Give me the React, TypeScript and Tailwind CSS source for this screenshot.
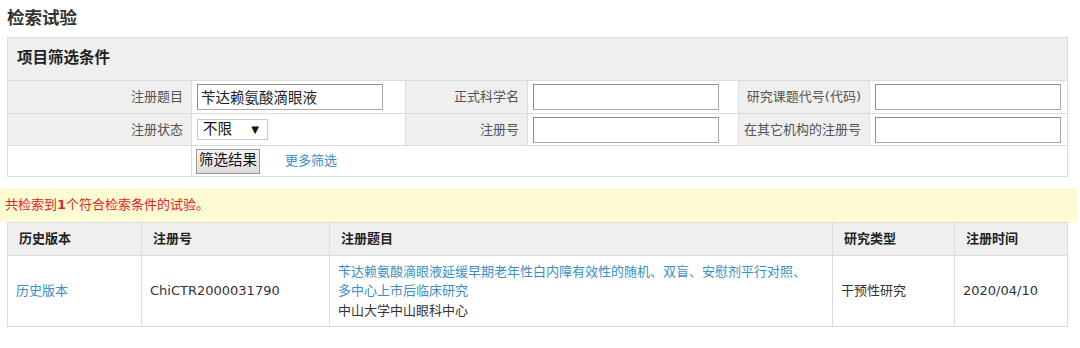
const font = { fontFamily: '"DejaVu Sans", "Noto Sans CJK SC", sans-serif' };

const Label = ({ text }: { text: string }) => (
  <td className="bg-[#efefef] border border-[#dcdcdc] text-right pr-2 text-[13px] text-[#555]">{text}</td>
);

const Field = ({ value, w = "w-[186px]" }: { value?: string; w?: string }) => (
  <td className="border border-[#dcdcdc] pl-[5px] bg-white">
    <input
      readOnly
      value={value ?? ""}
      className={`${w} h-[26px] border border-[#a9a9a9] border-t-[#8f8f8f] border-l-[#8f8f8f] px-[3px] text-[14.5px] text-[#222] outline-none`}
    />
  </td>
);

export default function App() {
  return (
    <div className="w-[1080px] h-[348px] bg-white text-[#333] overflow-hidden" style={font}>
      <h2 className="pl-[7px] pt-[7px] h-[37px] text-[17.5px] font-bold leading-[22px] text-[#333]">检索试验</h2>

      <table className="ml-[7px] w-[1060px] border-collapse table-fixed">
        <colgroup>
          <col className="w-[184px]" />
          <col className="w-[214px]" />
          <col className="w-[122px]" />
          <col className="w-[211px]" />
          <col className="w-[131px]" />
          <col className="w-[198px]" />
        </colgroup>
        <tbody>
          <tr className="h-[43px]">
            <td colSpan={6} className="bg-[#efefef] border border-[#dcdcdc] pl-[9px] text-[15.5px] font-bold text-[#222]">
              项目筛选条件
            </td>
          </tr>
          <tr className="h-[33px]">
            <Label text="注册题目" />
            <Field value="苄达赖氨酸滴眼液" />
            <Label text="正式科学名" />
            <Field />
            <Label text="研究课题代号(代码)" />
            <Field />
          </tr>
          <tr className="h-[32px]">
            <Label text="注册状态" />
            <td className="border border-[#dcdcdc] pl-[5px] bg-white">
              <div className="w-[71px] h-[21px] border border-[#c8c8c8] flex items-center justify-between pl-[5px] pr-[8px] text-[14.5px] text-[#111]">
                <span>不限</span>
                <span className="text-[10px]">▼</span>
              </div>
            </td>
            <Label text="注册号" />
            <Field />
            <Label text="在其它机构的注册号" />
            <Field />
          </tr>
          <tr className="h-[31px]">
            <td className="border border-[#dcdcdc] bg-white"></td>
            <td colSpan={5} className="border border-[#dcdcdc] bg-white pl-[4px]">
              <div className="flex items-center gap-[25px]">
                <button className="h-[25px] px-[2px] border border-[#9a9a9a] bg-gradient-to-b from-[#f4f4f4] to-[#dcdcdc] text-[14.5px] text-[#111]">
                  筛选结果
                </button>
                <a className="text-[13px] text-[#3b8fc4]">更多筛选</a>
              </div>
            </td>
          </tr>
        </tbody>
      </table>

      <div className="mt-[11px] w-[1077px] h-[34px] bg-[#fdfbd2] flex items-center pl-[5px] text-[13px] text-[#e02424]">
        共检索到<b className="font-bold">1</b>个符合检索条件的试验。
      </div>

      <table className="ml-[7px] w-[1060px] border-collapse table-fixed">
        <colgroup>
          <col className="w-[134px]" />
          <col className="w-[188px]" />
          <col className="w-[503px]" />
          <col className="w-[122px]" />
          <col className="w-[113px]" />
        </colgroup>
        <thead>
          <tr className="h-[33px] bg-[#efefef] text-[13px] font-bold text-[#222]">
            <th className="border border-[#dcdcdc] text-left pl-[11px] font-bold">历史版本</th>
            <th className="border border-[#dcdcdc] text-left pl-[11px] font-bold">注册号</th>
            <th className="border border-[#dcdcdc] text-left pl-[11px] font-bold">注册题目</th>
            <th className="border border-[#dcdcdc] text-left pl-[11px] font-bold">研究类型</th>
            <th className="border border-[#dcdcdc] text-left pl-[11px] font-bold">注册时间</th>
          </tr>
        </thead>
        <tbody>
          <tr className="h-[71px] text-[13px]">
            <td className="border border-[#dcdcdc] pl-[8px]">
              <a className="text-[#3b8fc4]">历史版本</a>
            </td>
            <td className="border border-[#dcdcdc] pl-[8px] text-[#333]">ChiCTR2000031790</td>
            <td className="border border-[#dcdcdc] pl-[8px] leading-[19.5px]">
              <a className="text-[#3b8fc4]">
                苄达赖氨酸滴眼液延缓早期老年性白内障有效性的随机、双盲、安慰剂平行对照、
                <br />
                多中心上市后临床研究
              </a>
              <br />
              <span className="text-[#333]">中山大学中山眼科中心</span>
            </td>
            <td className="border border-[#dcdcdc] pl-[8px] text-[#333]">干预性研究</td>
            <td className="border border-[#dcdcdc] pl-[8px] text-[#333]">2020/04/10</td>
          </tr>
        </tbody>
      </table>
    </div>
  );
}
